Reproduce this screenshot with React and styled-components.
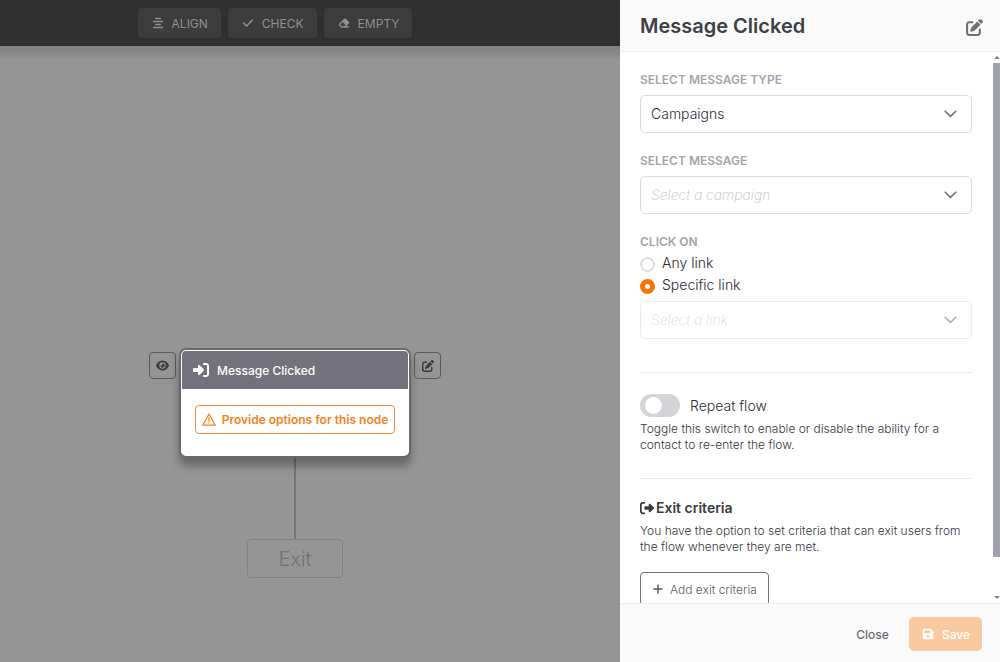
import React, { useState } from 'react'
import styled, { createGlobalStyle } from 'styled-components'
import {
  FaAlignCenter,
  FaCheck,
  FaEraser,
  FaEye,
  FaFloppyDisk,
  FaPenToSquare,
  FaPlus,
  FaRightFromBracket,
  FaRightToBracket,
} from 'react-icons/fa6'

const GlobalStyle = createGlobalStyle`
  *, *::before, *::after {
    box-sizing: border-box;
  }
  body {
    margin: 0;
    font-family: Inter, "Liberation Sans", sans-serif;
    font-size: 14px;
    font-weight: 300;
    color: #2c2c33;
  }
  button, select, input {
    font: inherit;
    color: inherit;
    margin: 0;
  }
  button {
    cursor: pointer;
  }
`
const Page = styled.div`
  display: flex;
  height: 100vh;
  overflow: hidden;
`
const Editor = styled.main`
  flex: 1;
  min-width: 0;
  display: flex;
  flex-direction: column;
  background: #959595;
`
const Toolbar = styled.div`
  display: flex;
  justify-content: center;
  gap: 7px;
  padding: 8px 70px 8px 0;
  background: #2f2f2f;
`
const ToolButton = styled.button`
  display: flex;
  align-items: center;
  gap: 8px;
  height: 30px;
  padding: 0 13px 0 14px;
  border: 0;
  border-radius: 4px;
  background: #3c3c3c;
  color: #909090;
  font-size: 12px;
  font-weight: 400;
`
const Canvas = styled.div`
  flex: 1;
  position: relative;
  overflow: hidden;
  background: linear-gradient(#7e7e7e, #959595 14px);
`
const NodeGroup = styled.div`
  position: absolute;
  top: 302px;
  left: 149px;
  display: flex;
  align-items: flex-start;
  gap: 3px;
`
const NodeAction = styled.button`
  display: grid;
  place-items: center;
  width: 27px;
  height: 27px;
  margin-top: 4px;
  padding: 0;
  border: 1px solid #5a5a5c;
  border-radius: 4px;
  background: transparent;
  color: #3c3c3f;
`
const Node = styled.section`
  width: 232px;
  border: 2px solid #69696b;
  border-radius: 7px;
  background: #fff;
  box-shadow: 0 8px 8px rgba(0, 0, 0, 0.3);
`
const NodeTitle = styled.header`
  display: flex;
  align-items: center;
  gap: 8px;
  height: 38px;
  margin: 1px 1px 0;
  padding: 0 11px;
  border-radius: 4px 4px 0 0;
  background: #73717b;
  color: #fff;
  font-size: 12px;
  font-weight: 500;
`
const NodeBody = styled.div`
  display: flex;
  justify-content: center;
  padding: 16px 12px 22px;
`
const NodeWarning = styled.button`
  display: flex;
  align-items: center;
  justify-content: center;
  gap: 6px;
  height: 29px;
  width: 200px;
  padding: 0;
  border: 1px solid #f58a36;
  border-radius: 4px;
  background: #fff;
  color: #f58220;
  font-size: 12px;
  font-weight: 600;
  white-space: nowrap;
`
const Edge = styled.div`
  position: absolute;
  top: 412px;
  left: 294px;
  width: 2px;
  height: 81px;
  background: #747476;
`
const ExitNode = styled.div`
  position: absolute;
  top: 493px;
  left: 247px;
  display: grid;
  place-items: center;
  width: 96px;
  height: 39px;
  border: 1px solid #828284;
  border-radius: 4px;
  color: #707175;
  font-size: 20px;
`
const Drawer = styled.aside`
  flex: 0 0 380px;
  display: flex;
  flex-direction: column;
  background: #fff;
`
const DrawerHeader = styled.header`
  display: flex;
  align-items: center;
  justify-content: space-between;
  height: 52px;
  padding: 0 17px 0 20px;
  border-bottom: 1px solid #efeff0;
  background: #fafafa;
`
const DrawerTitle = styled.h1`
  margin: 0;
  color: #3f3f46;
  font-size: 20px;
  line-height: 24px;
  font-weight: 600;
`
const IconButton = styled.button`
  display: flex;
  padding: 4px 0 0;
  border: 0;
  background: none;
  color: #707074;
`
const DrawerBody = styled.div`
  flex: 1;
  min-height: 0;
  display: flex;
`
const Form = styled.form`
  flex: 1;
  min-width: 0;
  overflow-y: auto;
  scrollbar-width: none;
  padding: 20px 21px 20px 20px;
`
const ScrollRail = styled.div`
  flex: 0 0 7px;
  display: flex;
  flex-direction: column;
  align-items: center;
  justify-content: space-between;
  padding: 4px 0;
`
const ScrollThumb = styled.div`
  width: 7px;
  height: 91%;
  margin: 4px 0 auto;
  background: #a1a1ac;
`
const ScrollArrow = styled.div`
  border: 3px solid transparent;
  border-top-width: ${({ $up }) => ($up ? 0 : 3)}px;
  border-bottom-width: ${({ $up }) => ($up ? 3 : 0)}px;
  border-top-color: ${({ $up }) => ($up ? 'transparent' : '#85858c')};
  border-bottom-color: ${({ $up }) => ($up ? '#85858c' : 'transparent')};
`
const Field = styled.div`
  margin-bottom: 20px;
`
const Label = styled.label`
  display: block;
  margin-bottom: 8px;
  color: #a4a4ad;
  font-size: 12px;
  line-height: 15px;
  font-weight: 600;
`
const RadioGroup = styled.fieldset`
  margin: 0 0 4px;
  padding: 0;
  border: 0;
`
const Legend = styled(Label).attrs({ as: 'legend' })`
  margin-bottom: 4px;
  padding: 0;
`
const SelectBox = styled.div`
  display: grid;
  align-items: center;
  opacity: ${({ $disabled }) => ($disabled ? 0.55 : 1)};

  > * {
    grid-area: 1 / 1;
  }
  svg {
    justify-self: end;
    margin-right: 15px;
    pointer-events: none;
  }
`
const Select = styled.select`
  appearance: none;
  width: 100%;
  height: 38px;
  padding: 0 36px 1px 10px;
  border: 1px solid #dcdcdf;
  border-radius: 5px;
  background: #fff;
  opacity: 1;
  color: ${({ $empty }) => ($empty ? '#c0c0c6' : '#2c2c33')};
  font-style: ${({ $empty }) => ($empty ? 'italic' : 'normal')};
  font-weight: ${({ $empty }) => ($empty ? 200 : 300)};
`
const RadioRow = styled.label`
  display: flex;
  align-items: center;
  gap: 7px;
  height: 22px;
  line-height: 20px;

  span {
    padding-bottom: 2px;
  }
`
const Radio = styled.input`
  appearance: none;
  width: 15px;
  height: 15px;
  border: 2px solid #dcdcdf;
  border-radius: 50%;
  background: #fff;

  &:checked {
    border: 5px solid #fa7305;
  }
`
const Divider = styled.hr`
  margin: ${({ $top }) => $top}px 0 20px;
  border: 0;
  border-top: 1px solid #e8e8ea;
`
const SwitchRow = styled.label`
  display: flex;
  align-items: center;
  gap: 10px;
  height: 24px;
  margin-bottom: 4px;
`
const Switch = styled.input`
  appearance: none;
  width: 40px;
  height: 23px;
  padding: 3px 5px;
  border-radius: 12px;
  background: #d4d4d8;

  &::before {
    content: '';
    display: block;
    width: 17px;
    height: 17px;
    border-radius: 50%;
    background: #fff;
  }
  &:checked {
    background: #fa7305;
  }
  &:checked::before {
    margin-left: auto;
  }
`
const Hint = styled.p`
  margin: 0;
  color: #36363d;
  font-size: 12px;
  line-height: 16px;
`
const SectionTitle = styled.h2`
  display: flex;
  align-items: center;
  gap: 2px;
  margin: 0 0 7px;
  color: #3a3a41;
  font-size: 14px;
  line-height: 17px;
  font-weight: 600;
`
const AddButton = styled.button`
  display: flex;
  align-items: center;
  gap: 6px;
  height: 34px;
  margin-top: 17px;
  padding: 0 11px;
  border: 1px solid #71717a;
  border-radius: 4px;
  background: #fff;
  color: #5a5a62;
  font-size: 12px;
`
const DrawerFooter = styled.footer`
  display: flex;
  align-items: center;
  justify-content: flex-end;
  gap: 20px;
  height: 59px;
  padding: 2px 18px 0 20px;
  border-top: 1px solid #ececee;
  background: #fafafa;
`
const CloseButton = styled.button`
  padding: 0;
  border: 0;
  background: none;
  color: #686b78;
  font-size: 12px;
  font-weight: 500;
`
const SaveButton = styled.button`
  display: flex;
  align-items: center;
  gap: 8px;
  height: 34px;
  padding: 0 12px 0 13px;
  border: 0;
  border-radius: 5px;
  background: #f9c9a0;
  color: #fff;
  font-size: 12px;
  font-weight: 500;
`

const WarningIcon = () => (
  <svg width="14" height="13" viewBox="0 0 14 13" fill="none" stroke="currentColor" strokeWidth="1.3" strokeLinejoin="round" strokeLinecap="round">
    <path d="M7 1 L13.2 12.2 H0.8 Z" />
    <path d="M7 4.8 V8.4 M7 10.2 V10.3" />
  </svg>
)

const ChevronIcon = () => (
  <svg width="13" height="8" viewBox="0 0 13 8" fill="none" stroke="#707076" strokeWidth="1.6" strokeLinecap="round" strokeLinejoin="round">
    <path d="M1.2 1.2 L6.5 6.4 L11.8 1.2" />
  </svg>
)

function SelectField({ id, label, option, empty, disabled }) {
  return (
    <SelectBox $disabled={disabled}>
      <Select id={id} aria-label={label} $empty={empty} disabled={disabled}>
        <option>{option}</option>
      </Select>
      <ChevronIcon />
    </SelectBox>
  )
}

function App() {
  const [target, setTarget] = useState('specific')
  const [repeat, setRepeat] = useState(false)

  return (
    <>
      <GlobalStyle />
      <Page>
        <Editor>
          <Toolbar>
            <ToolButton><FaAlignCenter size={12} /> ALIGN</ToolButton>
            <ToolButton><FaCheck size={12} /> CHECK</ToolButton>
            <ToolButton><FaEraser size={12} /> EMPTY</ToolButton>
          </Toolbar>
          <Canvas>
            <Edge />
            <NodeGroup>
              <NodeAction aria-label="Preview"><FaEye size={13} /></NodeAction>
              <Node>
                <NodeTitle><FaRightToBracket size={16} /> Message Clicked</NodeTitle>
                <NodeBody>
                  <NodeWarning><WarningIcon /> Provide options for this node</NodeWarning>
                </NodeBody>
              </Node>
              <NodeAction aria-label="Edit"><FaPenToSquare size={12} /></NodeAction>
            </NodeGroup>
            <ExitNode>Exit</ExitNode>
          </Canvas>
        </Editor>

        <Drawer>
          <DrawerHeader>
            <DrawerTitle>Message Clicked</DrawerTitle>
            <IconButton aria-label="Rename"><FaPenToSquare size={17} /></IconButton>
          </DrawerHeader>
          <DrawerBody>
            <Form>
              <Field>
                <Label htmlFor="type">SELECT MESSAGE TYPE</Label>
                <SelectField id="type" option="Campaigns" />
              </Field>
              <Field>
                <Label htmlFor="message">SELECT MESSAGE</Label>
                <SelectField id="message" option="Select a campaign" empty />
              </Field>
              <RadioGroup>
                <Legend>CLICK ON</Legend>
                <RadioRow>
                  <Radio type="radio" name="target" checked={target === 'any'} onChange={() => setTarget('any')} />
                  <span>Any link</span>
                </RadioRow>
                <RadioRow>
                  <Radio type="radio" name="target" checked={target === 'specific'} onChange={() => setTarget('specific')} />
                  <span>Specific link</span>
                </RadioRow>
              </RadioGroup>
              <SelectField id="link" label="Link" option="Select a link" empty disabled />
              <Divider $top={33} />
              <SwitchRow>
                <Switch type="checkbox" role="switch" checked={repeat} onChange={() => setRepeat(!repeat)} />
                Repeat flow
              </SwitchRow>
              <Hint>Toggle this switch to enable or disable the ability for a contact to re-enter the flow.</Hint>
              <Divider $top={25} />
              <SectionTitle><FaRightFromBracket size={14} /> Exit criteria</SectionTitle>
              <Hint>You have the option to set criteria that can exit users from the flow whenever they are met.</Hint>
              <AddButton type="button"><FaPlus size={12} /> Add exit criteria</AddButton>
            </Form>
            <ScrollRail>
              <ScrollArrow $up />
              <ScrollThumb />
              <ScrollArrow />
            </ScrollRail>
          </DrawerBody>
          <DrawerFooter>
            <CloseButton>Close</CloseButton>
            <SaveButton><FaFloppyDisk size={12} /> Save</SaveButton>
          </DrawerFooter>
        </Drawer>
      </Page>
    </>
  )
}

export default App
